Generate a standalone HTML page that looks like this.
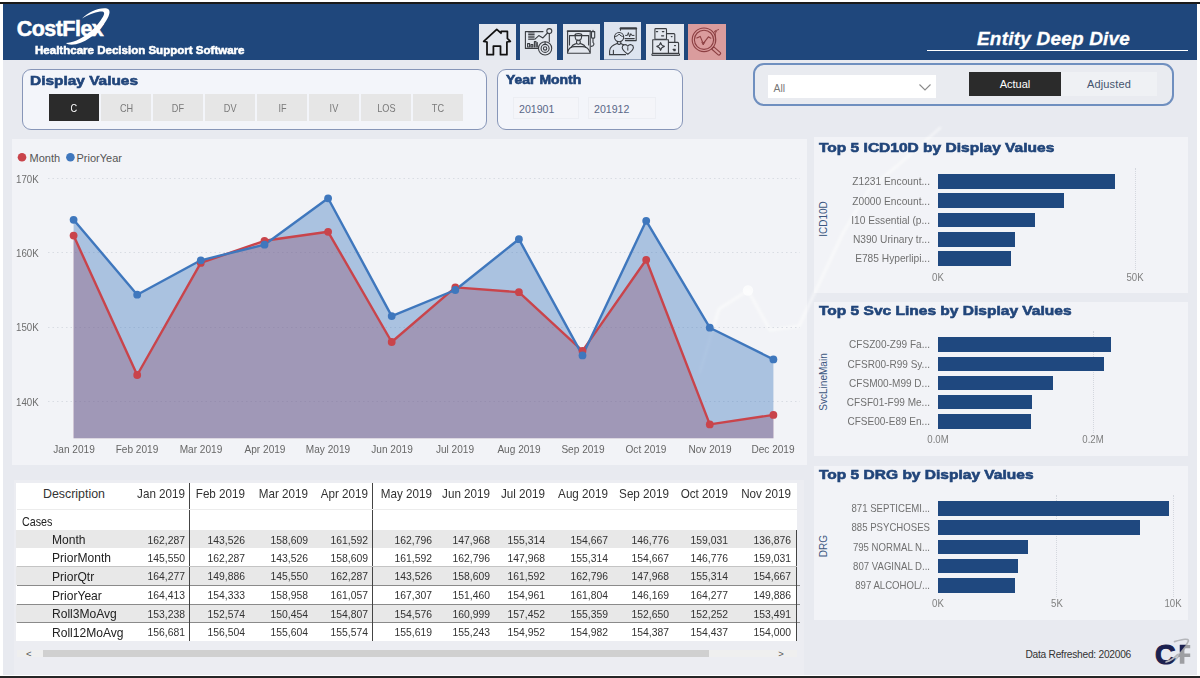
<!DOCTYPE html>
<html lang="en">
<head>
<meta charset="utf-8">
<title>Entity Deep Dive</title>
<style>
*{box-sizing:border-box;margin:0;padding:0}
html,body{width:1200px;height:678px;overflow:hidden;background:#fff}
body{position:relative;font-family:"Liberation Sans",sans-serif;color:#333}
.abs{position:absolute}
#topline{left:0;top:2px;width:1200px;height:2px;background:#1a1a1a}
#botline{left:0;top:676px;width:1200px;height:2px;background:#262626}
#page{left:3px;top:4px;width:1193.6px;height:670.5px;background:#e8eaf0}
#hdr{left:3px;top:4px;width:1193.6px;height:55.8px;background:#1f477c}
.logo{color:#fff;font-weight:bold;font-size:21.5px;letter-spacing:-0.55px;left:16.8px;top:16.8px;white-space:nowrap;-webkit-text-stroke:0.5px #fff}
.tag{color:#fff;font-weight:bold;font-size:10px;left:35px;top:45px;white-space:nowrap;transform-origin:0 50%;transform:scaleX(1.153);-webkit-text-stroke:0.5px #fff}
.pgt{color:#fff;font-weight:bold;font-style:italic;font-size:19px;letter-spacing:0.2px;left:977px;top:27.5px;white-space:nowrap;-webkit-text-stroke:0.3px #fff}
.nav{top:23.9px;width:37px;height:36px;background:#e3e7ee}
.box{border:1.3px solid #8796b8;border-radius:9px;background:#f3f5fa}
.btl{font-weight:bold;color:#21457a;font-size:13.33px;white-space:nowrap;-webkit-text-stroke:0.6px #21457a;transform-origin:0 50%;transform:scaleX(1.157)}
.sbtn{width:50px;height:27px;background:#e6e6e6;color:#7a7a7a;font-size:10.4px;text-align:center;line-height:29px}
.sbtn span{display:inline-block;transform:scaleX(0.88)}
.sbtn.sel{background:#2b2b2b;color:#fff}
.panel{background:rgba(255,255,255,0.45)}
.ylab{font-size:10.8px;color:#6e6e6e;white-space:nowrap;transform:scaleX(0.9);transform-origin:0 50%}
.xlab{font-size:10.8px;color:#666;width:80px;text-align:center;white-space:nowrap;transform:scaleX(0.935)}
.leg{font-size:11px;color:#555;white-space:nowrap}
.r{width:100px;text-align:right}
.th{font-size:12.4px;color:#333;white-space:nowrap}
.th.r{transform:scaleX(0.94);transform-origin:100% 50%}
.td{font-size:11px;color:#333;white-space:nowrap;transform:scaleX(0.943);transform-origin:100% 50%}
.rl{font-size:12.2px;color:#222;white-space:nowrap;transform:scaleX(0.99);transform-origin:0 50%}
.ttl{font-weight:bold;color:#21457a;font-size:13.33px;white-space:nowrap;-webkit-text-stroke:0.6px #21457a;transform-origin:0 50%;transform:scaleX(1.165)}
.cat{font-size:10.8px;color:#707070;white-space:nowrap;width:120px;transform:scaleX(0.945);transform-origin:100% 50%}
.axl{font-size:10.7px;color:#808080;transform:scaleX(0.9);width:60px;text-align:center;white-space:nowrap}
.ytitle{font-size:10.8px;color:#3b5680;width:100px;text-align:center;white-space:nowrap;transform:rotate(-90deg) scaleX(0.93)}
</style>
</head>
<body>
<div class="abs" id="topline"></div>
<div class="abs" id="page"></div>
<div class="abs" id="botline"></div>
<svg class="abs" style="left:0;top:0" width="1200" height="678" viewBox="0 0 1200 678" fill="none" stroke="#fff" stroke-linecap="round" stroke-linejoin="round">
<path d="M700,372 L719,309 L748,290.5 L770,330 L799,326 L843,233 L870,188 L897,166 L940,128" stroke-width="3" opacity="0.45" style="filter:blur(0.8px)"/>
<circle cx="748" cy="290.5" r="5.2" fill="#fff" stroke="none" opacity="0.7" style="filter:blur(0.7px)"/>
</svg>
<div class="abs" id="hdr"></div>

<!-- header -->
<div class="abs logo">CostFlex</div>
<svg class="abs" style="left:0;top:0" width="130" height="62" viewBox="0 0 130 62"><path d="M82,18.5 C88,12 98,7.5 106,8.2 C111,8.8 110.5,14 106,21 C100,31 89,41 76,44.2 C71,45.2 67.5,44.5 66,43 C69,42.8 72.5,42 76.5,40.4 C87,36 97.5,26.5 102.8,17 C105.5,12.5 104,11 100,11.5 C94,12.3 88,15 82,18.5 Z" fill="#fff"/></svg>
<div class="abs tag">Healthcare Decision Support Software</div>
<div class="abs pgt">Entity Deep Dive</div>
<div class="abs" style="left:926.5px;top:49.7px;width:261px;height:1.3px;background:#fff"></div>

<!-- nav buttons -->
<div class="abs nav" style="left:478.8px;width:37.3px"></div>
<div class="abs nav" style="left:520px;width:37.1px"></div>
<div class="abs nav" style="left:562.9px;width:36.7px"></div>
<div class="abs nav" style="left:603.9px;width:37.2px;top:21.8px;height:38px;background:#dde4ef;border-bottom:1.5px solid #8fa0bb"></div>
<div class="abs nav" style="left:646.4px;width:37.5px"></div>
<div class="abs nav" style="left:688.1px;width:37.7px;background:#da9c9d"></div>
<svg class="abs" style="left:470px;top:18px" width="262" height="45" viewBox="470 18 262 45" fill="none" stroke-linejoin="round" stroke-linecap="round">
<!-- home -->
<path d="M487,54.7 L487,42 L483.7,41.4 L496.75,29.3 L501,33.2 L501.2,31.4 L507.4,31.4 L507.4,38.4 L510.3,41.4 L506.9,42 L506.9,54.7 L500.5,54.7 L500.5,46.1 L493.4,46.1 L493.4,54.7 Z" stroke="#111" stroke-width="1.75"/>
<!-- dashboard -->
<g stroke="#3a3d42" stroke-width="1.1">
<path d="M543,31.6 H525.4 V48.4 H538.5"/>
<path d="M528.6,33 H534.2 M528.6,34.6 H534.2 M528.6,36.2 H534.2 M528.6,37.8 H534.2 M528.6,39.3 H534.2" stroke-width="1"/>
<path d="M527.6,47 V43.6 H529.6 V47 Z M531,47 V44.6 H532.8 V47 Z M534.4,47 V41.6 H536,V47 M537.3,47 V42.6"/>
<path d="M535,39.2 L538.8,35.6 L542.9,37.9 L547.5,33"/>
<circle cx="549.3" cy="31.1" r="2.5"/>
<path d="M549.3,33.8 V41.8"/>
<circle cx="545.1" cy="48.4" r="6.6"/>
<circle cx="545.1" cy="48.4" r="4"/>
<circle cx="545.1" cy="48.4" r="1.7"/>
<path d="M545.1,41.8 V44.4"/>
</g>
<!-- patient in bed -->
<g stroke="#3a3d42" stroke-width="1.1">
<path d="M567.6,31.2 H590.2" stroke-width="1.7"/>
<path d="M567.6,31.2 V53.2 H590.2 V31.2"/>
<path d="M569.5,35.6 H574.5 M582.5,35.6 H588.6 M569.5,35.6 V45 M588.6,35.6 V45"/>
<path d="M574.9,35.5 C574.9,33 581.9,33 581.9,35.5"/>
<path d="M574.6,35.6 H582.2"/>
<path d="M575.2,36 C574.6,42.4 582,42.4 581.6,36"/>
<path d="M576.6,41.2 V43.4 M580.2,41.2 V43.4"/>
<path d="M571.2,47.4 C572.4,44.4 575,44.2 576.6,43.4 C577.6,44.6 579.2,44.6 580.2,43.4 C581.8,44.2 584.4,44.4 585.6,47.4"/>
<path d="M567.8,52 C568.6,47.6 571.4,46.6 574.6,46.6 H582.4 C585.6,46.6 588.4,47.6 589.8,52"/>
<path d="M577.4,39.6 C578,40.2 578.8,40.2 579.4,39.6" stroke-width="0.8"/>
<path d="M593,31.4 V30.2 M591.5,31.6 H594.7 V37.6 C594.7,38.6 591.5,38.6 591.5,37.6 Z M593,38.4 V42.4 C594.4,43.4 594.4,46 591.2,46.4"/>
</g>
<!-- person w/ monitor + heart -->
<g stroke="#3a3d42" stroke-width="1.1">
<path d="M620.5,30.2 V28 H636.2 V40.6 H625.4" />
<path d="M620.5,28.4 H636.2" stroke-width="2"/>
<path d="M625,38.6 H634.2"/>
<path d="M625.6,35.4 H627.4 L628.4,32.6 L629.6,36.8 L630.8,33.6 L631.8,35.4 H634" stroke-width="1"/>
<circle cx="619.1" cy="37.1" r="4.6"/>
<path d="M614.6,36.6 C616.4,36.6 618.4,35.4 619.2,34 C620,35.6 622,36.6 623.6,36.6" stroke-width="1"/>
<path d="M617.4,41.6 V43.4 M620.8,41.6 V43.4"/>
<path d="M609.6,54.6 V51 C609.6,46.6 613.2,45.2 617.4,43.4 C618.4,44.8 619.8,44.8 620.8,43.4 C622,44 623,44.4 624,44.8"/>
<path d="M609.6,54.6 H625.6 M613.4,50.4 V54.4"/>
<path d="M627.8,54.2 C624.4,51.6 622.2,49.6 622.2,47.4 C622.2,44.4 626.2,43.6 627.8,46.2 C629.4,43.6 633.4,44.4 633.4,47.4 C633.4,49.6 631.2,51.6 627.8,54.2 Z"/>
<path d="M627.8,47.6 V50.2" stroke-width="1"/>
</g>
<!-- hospital -->
<g stroke="#3a3d42" stroke-width="1.1">
<rect x="654.9" y="28.6" width="11.6" height="10.6" rx="0.8"/>
<rect x="652.7" y="39.8" width="15.7" height="13.6"/>
<path d="M666.6,33.6 H673.8 C674.4,33.6 674.8,34 674.8,34.6 V42.4"/>
<path d="M668.6,42.4 H677.6 C678.2,42.4 678.6,42.8 678.6,43.4 V53.4 H668.6"/>
<path d="M652.3,53.8 H679.5 V55.4 H652.3 Z" stroke-width="1"/>
<path d="M660.6,42.6 C661,45 661.8,45.6 664.4,46.4 C661.8,47.2 661,47.8 660.6,50.4 C660.2,47.8 659.4,47.2 656.8,46.4 C659.4,45.6 660.2,45 660.6,42.6 Z"/>
<path d="M656.4,31.6 H657.6 M662.4,31.6 H663.8 M661.6,35.8 H663.6 M671.4,36.6 H672 M674.6,45.6 H675.4 M673.2,49.4 H675.2 M673.8,50.6 H675.2" stroke-width="1.3"/>
</g>
<!-- magnifier -->
<g stroke="#8c3f42" stroke-width="1.1">
<circle cx="704" cy="39.8" r="11.8"/>
<circle cx="704" cy="39.8" r="9.6"/>
<path d="M696.8,38 L700.2,36.4 L703.2,43.6 L708.4,36.8 L710.8,38.2"/>
<path d="M701.8,42.2 L703.2,45 L704.8,42.2" stroke-width="0.9"/>
<path d="M711.6,49 L713.8,46.8 L720.4,52.6 C721.4,53.6 719.4,55.8 718.2,54.8 Z"/>
<path d="M715.3,42.6 V31 M714,32.4 L715.3,30.6 L716.8,32 M716.4,30.4 L718.6,29.6" stroke-width="0.9"/>
</g>
</svg>

<!-- slicers -->
<div class="abs box" style="left:22px;top:69px;width:465px;height:61px"></div>
<div class="abs btl" style="left:30px;top:73px">Display Values</div>
<div class="abs sbtn sel" style="left:49.2px;top:94px"><span>C</span></div>
<div class="abs sbtn" style="left:101.2px;top:94px"><span>CH</span></div>
<div class="abs sbtn" style="left:153.2px;top:94px"><span>DF</span></div>
<div class="abs sbtn" style="left:205.2px;top:94px"><span>DV</span></div>
<div class="abs sbtn" style="left:257.2px;top:94px"><span>IF</span></div>
<div class="abs sbtn" style="left:309.2px;top:94px"><span>IV</span></div>
<div class="abs sbtn" style="left:361.2px;top:94px"><span>LOS</span></div>
<div class="abs sbtn" style="left:413.2px;top:94px"><span>TC</span></div>
<div class="abs box" style="left:497px;top:69px;width:186px;height:61px"></div>
<div class="abs btl" style="left:506px;top:73px;font-size:12px;transform:scaleX(1.164)">Year Month</div>
<div class="abs" style="left:512.5px;top:96.5px;width:66px;height:22.5px;background:#f4f5f9;border:1px solid #eceef3;font-size:10.6px;color:#5a6888;line-height:22.5px;padding-left:5.5px">201901</div>
<div class="abs" style="left:587.5px;top:96.5px;width:68px;height:22.5px;background:#f4f5f9;border:1px solid #eceef3;font-size:10.6px;color:#5a6888;line-height:22.5px;padding-left:5.5px">201912</div>

<div class="abs box" style="left:753px;top:62.8px;width:420.5px;height:43.7px;background:#e9ebf0;border:2px solid #6f8fbf;border-radius:11px"></div>
<div class="abs" style="left:768px;top:75px;width:167.5px;height:23px;background:#fff;font-size:10.4px;color:#777;line-height:27px;padding-left:5.5px">All</div>
<svg class="abs" style="left:915px;top:80px" width="20" height="14" viewBox="0 0 20 14"><path d="M4.5,4.5 L10,10 L15.5,4.5" fill="none" stroke="#8a8a8a" stroke-width="1.1"/></svg>
<div class="abs" style="left:969px;top:71.5px;width:92px;height:24px;background:#2b2b2b;color:#fff;font-size:11px;text-align:center;line-height:25.4px">Actual</div>
<div class="abs" style="left:1061px;top:71.5px;width:96px;height:24px;color:#44546e;background:rgba(255,255,255,0.3);font-size:11px;letter-spacing:0.15px;text-align:center;line-height:25.4px">Adjusted</div>

<!-- line chart panel -->
<div class="abs panel" style="left:11.5px;top:139px;width:795px;height:326px"></div>
<svg class="abs" style="left:0;top:0" width="1200" height="678" viewBox="0 0 1200 678">
<line x1="48" x2="800" y1="178.5" y2="178.5" stroke="#d9dce3" stroke-width="1" stroke-dasharray="1.5,3"/>
<line x1="48" x2="800" y1="252.5" y2="252.5" stroke="#d9dce3" stroke-width="1" stroke-dasharray="1.5,3"/>
<line x1="48" x2="800" y1="327.5" y2="327.5" stroke="#d9dce3" stroke-width="1" stroke-dasharray="1.5,3"/>
<line x1="48" x2="800" y1="401.5" y2="401.5" stroke="#d9dce3" stroke-width="1" stroke-dasharray="1.5,3"/>
<path d="M73.6,438.2 L73.6,235.6 L137.2,375.0 L200.8,262.9 L264.5,240.8 L328.1,231.8 L391.7,342.0 L455.3,287.4 L518.9,292.2 L582.5,350.9 L646.2,259.8 L709.8,424.4 L773.4,414.9 L773.4,438.2 Z" fill="#c9444b" fill-opacity="0.4"/>
<path d="M73.6,438.2 L73.6,219.8 L137.2,294.7 L200.8,260.3 L264.5,244.7 L328.1,198.3 L391.7,316.1 L455.3,290.0 L518.9,239.2 L582.5,355.4 L646.2,220.8 L709.8,327.7 L773.4,359.4 L773.4,438.2 Z" fill="#3f77bd" fill-opacity="0.4"/>
<polyline points="73.6,235.6 137.2,375.0 200.8,262.9 264.5,240.8 328.1,231.8 391.7,342.0 455.3,287.4 518.9,292.2 582.5,350.9 646.2,259.8 709.8,424.4 773.4,414.9" fill="none" stroke="#c9444b" stroke-width="2.4" stroke-linejoin="round"/>
<polyline points="73.6,219.8 137.2,294.7 200.8,260.3 264.5,244.7 328.1,198.3 391.7,316.1 455.3,290.0 518.9,239.2 582.5,355.4 646.2,220.8 709.8,327.7 773.4,359.4" fill="none" stroke="#3f77bd" stroke-width="2.4" stroke-linejoin="round"/>
<circle cx="73.6" cy="235.6" r="3.9" fill="#c9444b"/>
<circle cx="137.2" cy="375.0" r="3.9" fill="#c9444b"/>
<circle cx="200.8" cy="262.9" r="3.9" fill="#c9444b"/>
<circle cx="264.5" cy="240.8" r="3.9" fill="#c9444b"/>
<circle cx="328.1" cy="231.8" r="3.9" fill="#c9444b"/>
<circle cx="391.7" cy="342.0" r="3.9" fill="#c9444b"/>
<circle cx="455.3" cy="287.4" r="3.9" fill="#c9444b"/>
<circle cx="518.9" cy="292.2" r="3.9" fill="#c9444b"/>
<circle cx="582.5" cy="350.9" r="3.9" fill="#c9444b"/>
<circle cx="646.2" cy="259.8" r="3.9" fill="#c9444b"/>
<circle cx="709.8" cy="424.4" r="3.9" fill="#c9444b"/>
<circle cx="773.4" cy="414.9" r="3.9" fill="#c9444b"/>
<circle cx="73.6" cy="219.8" r="3.9" fill="#3f77bd"/>
<circle cx="137.2" cy="294.7" r="3.9" fill="#3f77bd"/>
<circle cx="200.8" cy="260.3" r="3.9" fill="#3f77bd"/>
<circle cx="264.5" cy="244.7" r="3.9" fill="#3f77bd"/>
<circle cx="328.1" cy="198.3" r="3.9" fill="#3f77bd"/>
<circle cx="391.7" cy="316.1" r="3.9" fill="#3f77bd"/>
<circle cx="455.3" cy="290.0" r="3.9" fill="#3f77bd"/>
<circle cx="518.9" cy="239.2" r="3.9" fill="#3f77bd"/>
<circle cx="582.5" cy="355.4" r="3.9" fill="#3f77bd"/>
<circle cx="646.2" cy="220.8" r="3.9" fill="#3f77bd"/>
<circle cx="709.8" cy="327.7" r="3.9" fill="#3f77bd"/>
<circle cx="773.4" cy="359.4" r="3.9" fill="#3f77bd"/>
<circle cx="22" cy="157.3" r="4.3" fill="#c9444b"/><circle cx="70.4" cy="157.3" r="4.3" fill="#3f77bd"/>
</svg>
<div class="abs leg" style="left:29.5px;top:151.8px">Month</div>
<div class="abs leg" style="left:76.5px;top:151.8px">PriorYear</div>
<div class="abs ylab" style="left:16px;top:172.8px">170K</div>
<div class="abs ylab" style="left:16px;top:246.8px">160K</div>
<div class="abs ylab" style="left:16px;top:321.1px">150K</div>
<div class="abs ylab" style="left:16px;top:395.6px">140K</div>
<div class="abs xlab" style="left:33.6px;top:443.2px">Jan 2019</div>
<div class="abs xlab" style="left:97.2px;top:443.2px">Feb 2019</div>
<div class="abs xlab" style="left:160.8px;top:443.2px">Mar 2019</div>
<div class="abs xlab" style="left:224.5px;top:443.2px">Apr 2019</div>
<div class="abs xlab" style="left:288.1px;top:443.2px">May 2019</div>
<div class="abs xlab" style="left:351.7px;top:443.2px">Jun 2019</div>
<div class="abs xlab" style="left:415.3px;top:443.2px">Jul 2019</div>
<div class="abs xlab" style="left:478.9px;top:443.2px">Aug 2019</div>
<div class="abs xlab" style="left:542.5px;top:443.2px">Sep 2019</div>
<div class="abs xlab" style="left:606.2px;top:443.2px">Oct 2019</div>
<div class="abs xlab" style="left:669.8px;top:443.2px">Nov 2019</div>
<div class="abs xlab" style="left:733.4px;top:443.2px">Dec 2019</div>

<!-- table -->
<div class="abs" style="left:14px;top:479.6px;width:790px;height:195px;background:rgba(255,255,255,0.18)"></div>
<div class="abs" style="left:16.4px;top:483.4px;width:780.6px;height:157.3px;background:#fff"></div>
<div class="abs" style="left:16.4px;top:529.9px;width:780.6px;height:18.3px;background:#e8e8e8"></div>
<div class="abs" style="left:16.4px;top:566.3px;width:780.6px;height:19.0px;background:#e8e8e8"></div>
<div class="abs" style="left:16.4px;top:604.1px;width:780.6px;height:18.8px;background:#e8e8e8"></div>
<div class="abs" style="left:17px;top:584.8px;width:782.5px;height:1px;background:#8a8a8a"></div>
<div class="abs" style="left:17px;top:603.6px;width:782.5px;height:1px;background:#8a8a8a"></div>
<div class="abs" style="left:17px;top:622.4px;width:782.5px;height:1px;background:#8a8a8a"></div>
<div class="abs" style="left:188.5px;top:483.4px;width:1px;height:157.3px;background:#444"></div>
<div class="abs" style="left:371.5px;top:483.4px;width:1px;height:157.3px;background:#444"></div>
<div class="abs" style="left:796px;top:529.9px;width:1px;height:110.8px;background:#444"></div>
<div class="abs" style="left:17px;top:509.3px;width:780px;height:1px;background:#ececec"></div>
<div class="abs" style="left:17px;top:565.8px;width:780px;height:1px;background:#c4c4c4"></div>
<div class="abs th" style="left:43px;top:487px">Description</div>
<div class="abs th r" style="left:84.5px;top:487px">Jan 2019</div>
<div class="abs th r" style="left:145.0px;top:487px">Feb 2019</div>
<div class="abs th r" style="left:207.5px;top:487px">Mar 2019</div>
<div class="abs th r" style="left:267.5px;top:487px">Apr 2019</div>
<div class="abs th r" style="left:332.0px;top:487px">May 2019</div>
<div class="abs th r" style="left:390.3px;top:487px">Jun 2019</div>
<div class="abs th r" style="left:444.8px;top:487px">Jul 2019</div>
<div class="abs th r" style="left:507.6px;top:487px">Aug 2019</div>
<div class="abs th r" style="left:568.5px;top:487px">Sep 2019</div>
<div class="abs th r" style="left:628.0px;top:487px">Oct 2019</div>
<div class="abs th r" style="left:691.3px;top:487px">Nov 2019</div>
<div class="abs rl" style="left:22px;top:515px;transform:scaleX(0.88)">Cases</div>
<div class="abs rl" style="left:52px;top:532.9px">Month</div>
<div class="abs td r" style="left:84.5px;top:533.6px">162,287</div>
<div class="abs td r" style="left:145.0px;top:533.6px">143,526</div>
<div class="abs td r" style="left:207.5px;top:533.6px">158,609</div>
<div class="abs td r" style="left:267.5px;top:533.6px">161,592</div>
<div class="abs td r" style="left:332.0px;top:533.6px">162,796</div>
<div class="abs td r" style="left:390.3px;top:533.6px">147,968</div>
<div class="abs td r" style="left:444.8px;top:533.6px">155,314</div>
<div class="abs td r" style="left:507.6px;top:533.6px">154,667</div>
<div class="abs td r" style="left:568.5px;top:533.6px">146,776</div>
<div class="abs td r" style="left:628.0px;top:533.6px">159,031</div>
<div class="abs td r" style="left:691.3px;top:533.6px">136,876</div>
<div class="abs rl" style="left:52px;top:551.1px">PriorMonth</div>
<div class="abs td r" style="left:84.5px;top:551.9px">145,550</div>
<div class="abs td r" style="left:145.0px;top:551.9px">162,287</div>
<div class="abs td r" style="left:207.5px;top:551.9px">143,526</div>
<div class="abs td r" style="left:267.5px;top:551.9px">158,609</div>
<div class="abs td r" style="left:332.0px;top:551.9px">161,592</div>
<div class="abs td r" style="left:390.3px;top:551.9px">162,796</div>
<div class="abs td r" style="left:444.8px;top:551.9px">147,968</div>
<div class="abs td r" style="left:507.6px;top:551.9px">155,314</div>
<div class="abs td r" style="left:568.5px;top:551.9px">154,667</div>
<div class="abs td r" style="left:628.0px;top:551.9px">146,776</div>
<div class="abs td r" style="left:691.3px;top:551.9px">159,031</div>
<div class="abs rl" style="left:52px;top:569.7px">PriorQtr</div>
<div class="abs td r" style="left:84.5px;top:570.4px">164,277</div>
<div class="abs td r" style="left:145.0px;top:570.4px">149,886</div>
<div class="abs td r" style="left:207.5px;top:570.4px">145,550</div>
<div class="abs td r" style="left:267.5px;top:570.4px">162,287</div>
<div class="abs td r" style="left:332.0px;top:570.4px">143,526</div>
<div class="abs td r" style="left:390.3px;top:570.4px">158,609</div>
<div class="abs td r" style="left:444.8px;top:570.4px">161,592</div>
<div class="abs td r" style="left:507.6px;top:570.4px">162,796</div>
<div class="abs td r" style="left:568.5px;top:570.4px">147,968</div>
<div class="abs td r" style="left:628.0px;top:570.4px">155,314</div>
<div class="abs td r" style="left:691.3px;top:570.4px">154,667</div>
<div class="abs rl" style="left:52px;top:588.6px">PriorYear</div>
<div class="abs td r" style="left:84.5px;top:589.3px">164,413</div>
<div class="abs td r" style="left:145.0px;top:589.3px">154,333</div>
<div class="abs td r" style="left:207.5px;top:589.3px">158,958</div>
<div class="abs td r" style="left:267.5px;top:589.3px">161,057</div>
<div class="abs td r" style="left:332.0px;top:589.3px">167,307</div>
<div class="abs td r" style="left:390.3px;top:589.3px">151,460</div>
<div class="abs td r" style="left:444.8px;top:589.3px">154,961</div>
<div class="abs td r" style="left:507.6px;top:589.3px">161,804</div>
<div class="abs td r" style="left:568.5px;top:589.3px">146,169</div>
<div class="abs td r" style="left:628.0px;top:589.3px">164,277</div>
<div class="abs td r" style="left:691.3px;top:589.3px">149,886</div>
<div class="abs rl" style="left:52px;top:607.4px">Roll3MoAvg</div>
<div class="abs td r" style="left:84.5px;top:608.1px">153,238</div>
<div class="abs td r" style="left:145.0px;top:608.1px">152,574</div>
<div class="abs td r" style="left:207.5px;top:608.1px">150,454</div>
<div class="abs td r" style="left:267.5px;top:608.1px">154,807</div>
<div class="abs td r" style="left:332.0px;top:608.1px">154,576</div>
<div class="abs td r" style="left:390.3px;top:608.1px">160,999</div>
<div class="abs td r" style="left:444.8px;top:608.1px">157,452</div>
<div class="abs td r" style="left:507.6px;top:608.1px">155,359</div>
<div class="abs td r" style="left:568.5px;top:608.1px">152,650</div>
<div class="abs td r" style="left:628.0px;top:608.1px">152,252</div>
<div class="abs td r" style="left:691.3px;top:608.1px">153,491</div>
<div class="abs rl" style="left:52px;top:625.7px">Roll12MoAvg</div>
<div class="abs td r" style="left:84.5px;top:626.4px">156,681</div>
<div class="abs td r" style="left:145.0px;top:626.4px">156,504</div>
<div class="abs td r" style="left:207.5px;top:626.4px">155,604</div>
<div class="abs td r" style="left:267.5px;top:626.4px">155,574</div>
<div class="abs td r" style="left:332.0px;top:626.4px">155,619</div>
<div class="abs td r" style="left:390.3px;top:626.4px">155,243</div>
<div class="abs td r" style="left:444.8px;top:626.4px">154,952</div>
<div class="abs td r" style="left:507.6px;top:626.4px">154,982</div>
<div class="abs td r" style="left:568.5px;top:626.4px">154,387</div>
<div class="abs td r" style="left:628.0px;top:626.4px">154,437</div>
<div class="abs td r" style="left:691.3px;top:626.4px">154,000</div>
<div class="abs" style="left:16.5px;top:649.5px;width:780.5px;height:7.2px;background:#efefef"></div>
<div class="abs" style="left:42.6px;top:649.5px;width:666.5px;height:7.2px;background:#d0d0d0"></div>
<div class="abs" style="left:26px;top:647.6px;font-size:9.5px;color:#555">&lt;</div>
<div class="abs" style="left:778.2px;top:647.6px;font-size:9.5px;color:#555">&gt;</div>

<!-- bar charts -->
<div class="abs panel" style="left:814px;top:137.3px;width:374px;height:155.7px"></div>
<div class="abs ttl" style="left:819px;top:139.5px">Top 5 ICD10D by Display Values</div>
<div class="abs ytitle" style="left:772.7px;top:213.0px">ICD10D</div>
<div class="abs" style="left:1134.5px;top:168.0px;width:0;height:102.0px;border-left:1px dotted #d4d7de"></div>
<div class="abs" style="left:938.3px;top:174.0px;width:176.7px;height:14.7px;background:#1f487f"></div>
<div class="abs cat r" style="left:810.0px;top:175.2px;transform:scaleX(0.945)">Z1231 Encount...</div>
<div class="abs" style="left:938.3px;top:193.3px;width:126.0px;height:14.7px;background:#1f487f"></div>
<div class="abs cat r" style="left:810.0px;top:194.5px;transform:scaleX(0.945)">Z0000 Encount...</div>
<div class="abs" style="left:938.3px;top:212.7px;width:97.0px;height:14.6px;background:#1f487f"></div>
<div class="abs cat r" style="left:810.0px;top:213.8px;transform:scaleX(0.945)">I10 Essential (p...</div>
<div class="abs" style="left:938.3px;top:232.0px;width:76.4px;height:14.7px;background:#1f487f"></div>
<div class="abs cat r" style="left:810.0px;top:233.2px;transform:scaleX(0.945)">N390 Urinary tr...</div>
<div class="abs" style="left:938.3px;top:251.3px;width:72.7px;height:14.7px;background:#1f487f"></div>
<div class="abs cat r" style="left:810.0px;top:252.4px;transform:scaleX(0.945)">E785 Hyperlipi...</div>
<div class="abs axl" style="left:908.0px;top:271.0px">0K</div>
<div class="abs axl" style="left:1105.0px;top:271.0px">50K</div>
<div class="abs panel" style="left:814px;top:301.7px;width:374px;height:154.3px"></div>
<div class="abs ttl" style="left:819px;top:302.9px">Top 5 Svc Lines by Display Values</div>
<div class="abs ytitle" style="left:772.7px;top:376.0px">SvcLineMain</div>
<div class="abs" style="left:1092.8px;top:331.3px;width:0;height:101.4px;border-left:1px dotted #d4d7de"></div>
<div class="abs" style="left:938.3px;top:337.3px;width:172.4px;height:14.4px;background:#1f487f"></div>
<div class="abs cat r" style="left:810.0px;top:338.3px;transform:scaleX(0.930)">CFSZ00-Z99 Fa...</div>
<div class="abs" style="left:938.3px;top:356.7px;width:165.7px;height:14.3px;background:#1f487f"></div>
<div class="abs cat r" style="left:810.0px;top:357.7px;transform:scaleX(0.930)">CFSR00-R99 Sy...</div>
<div class="abs" style="left:938.3px;top:376.0px;width:115.0px;height:14.0px;background:#1f487f"></div>
<div class="abs cat r" style="left:810.0px;top:376.8px;transform:scaleX(0.930)">CFSM00-M99 D...</div>
<div class="abs" style="left:938.3px;top:395.3px;width:93.4px;height:14.0px;background:#1f487f"></div>
<div class="abs cat r" style="left:810.0px;top:396.1px;transform:scaleX(0.930)">CFSF01-F99 Me...</div>
<div class="abs" style="left:938.3px;top:414.3px;width:92.7px;height:14.4px;background:#1f487f"></div>
<div class="abs cat r" style="left:810.0px;top:415.3px;transform:scaleX(0.930)">CFSE00-E89 En...</div>
<div class="abs axl" style="left:908.0px;top:433.3px">0.0M</div>
<div class="abs axl" style="left:1063.3px;top:433.3px">0.2M</div>
<div class="abs panel" style="left:814px;top:466.0px;width:374px;height:153.8px"></div>
<div class="abs ttl" style="left:819px;top:466.6px">Top 5 DRG by Display Values</div>
<div class="abs ytitle" style="left:772.7px;top:539.9px">DRG</div>
<div class="abs" style="left:1056.2px;top:495.0px;width:0;height:101.7px;border-left:1px dotted #d4d7de"></div>
<div class="abs" style="left:1172.8px;top:495.0px;width:0;height:101.7px;border-left:1px dotted #d4d7de"></div>
<div class="abs" style="left:938.3px;top:501.0px;width:231.0px;height:14.7px;background:#1f487f"></div>
<div class="abs cat r" style="left:810.0px;top:502.2px;transform:scaleX(0.890)">871 SEPTICEMI...</div>
<div class="abs" style="left:938.3px;top:520.3px;width:202.0px;height:14.7px;background:#1f487f"></div>
<div class="abs cat r" style="left:810.0px;top:521.4px;transform:scaleX(0.890)">885 PSYCHOSES</div>
<div class="abs" style="left:938.3px;top:539.7px;width:90.0px;height:14.3px;background:#1f487f"></div>
<div class="abs cat r" style="left:810.0px;top:540.6px;transform:scaleX(0.890)">795 NORMAL N...</div>
<div class="abs" style="left:938.3px;top:559.0px;width:79.4px;height:14.3px;background:#1f487f"></div>
<div class="abs cat r" style="left:810.0px;top:559.9px;transform:scaleX(0.890)">807 VAGINAL D...</div>
<div class="abs" style="left:938.3px;top:578.3px;width:76.7px;height:14.4px;background:#1f487f"></div>
<div class="abs cat r" style="left:810.0px;top:579.3px;transform:scaleX(0.890)">897 ALCOHOL/...</div>
<div class="abs axl" style="left:908.0px;top:597.0px">0K</div>
<div class="abs axl" style="left:1026.7px;top:597.0px">5K</div>
<div class="abs axl" style="left:1143.3px;top:597.0px">10K</div>

<div class="abs" style="left:1025.5px;top:648.6px;font-size:10.2px;color:#333;white-space:nowrap;letter-spacing:-0.25px">Data Refreshed: 202006</div>
<svg class="abs" style="left:1148px;top:632px" width="50" height="42" viewBox="1148 632 50 42">
<path d="M1169.4,663.6 C1177,660 1184.2,650 1188.4,641 C1188.6,638.4 1184,638.8 1174.5,641.6" fill="none" stroke="#b4b6ba" stroke-width="1.7" stroke-linecap="round"/>
<path d="M1179.8,645 H1190.2 V648.2 H1184.4 V653.4 H1190.2 V657 H1184.4 V663.8 H1179.8 V657 H1178.4 V653.4 H1179.8 Z" fill="#9d9ea2"/>
<path d="M1179.8,644.8 H1186 L1179.8,652.6 Z" fill="#1b2150"/>
<text x="1155" y="663.9" font-family="Liberation Sans, sans-serif" font-weight="bold" font-size="28.5" fill="#1b2150" stroke="#1b2150" stroke-width="1.1">C</text>
<path d="M1166,662 C1171,660.6 1174.6,657.8 1177.6,654.6" fill="none" stroke="#b4b6ba" stroke-width="1.7" stroke-linecap="round"/>
</svg>
</body>
</html>
